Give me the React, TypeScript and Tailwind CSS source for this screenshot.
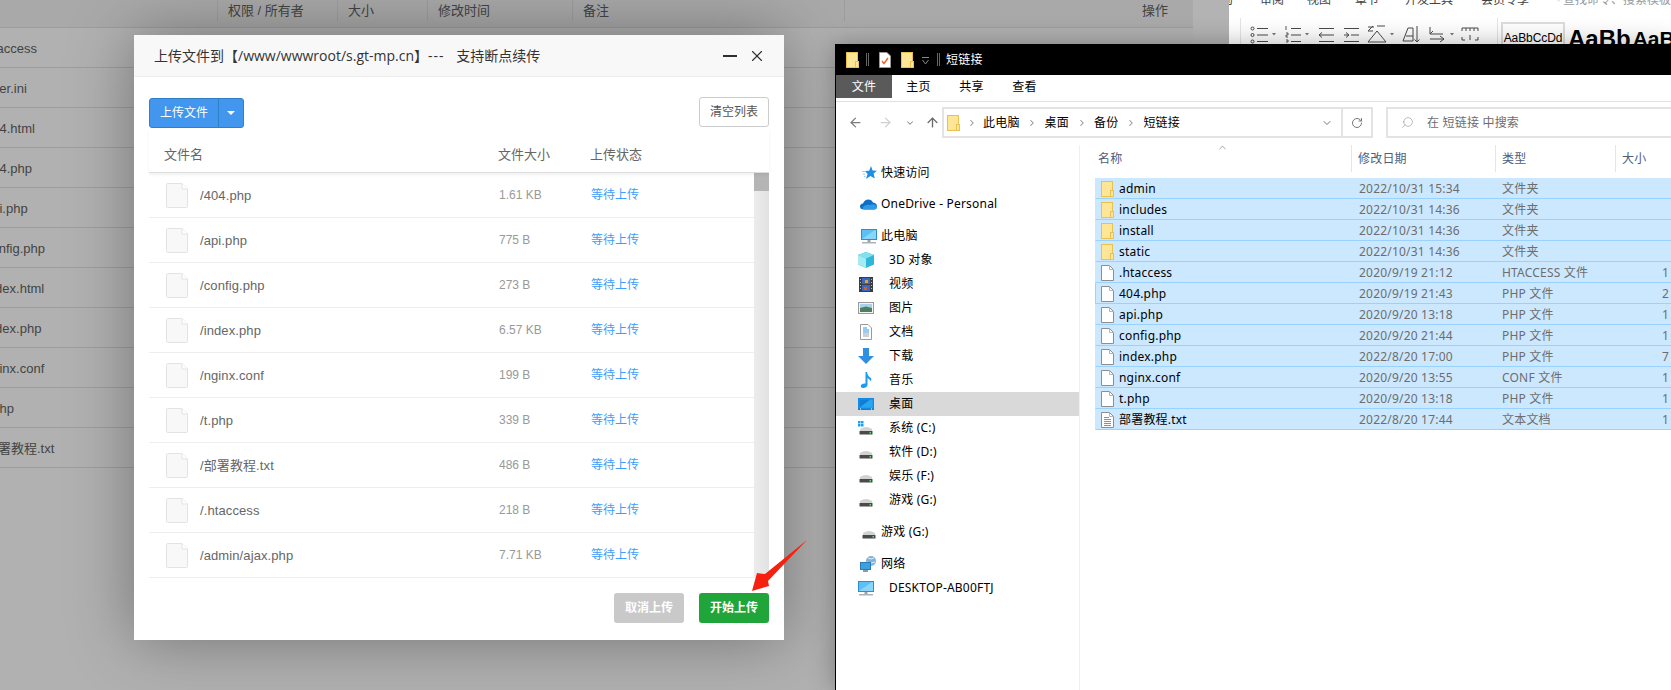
import React from "react";
import { ArrowLeft, ArrowRight, ArrowUp, ChevronDown, ChevronRight, ChevronUp, RotateCw, Search, X } from "lucide-react";

const pageFiles = [".htaccess", ".user.ini", "404.html", "404.php", "api.php", "config.php", "index.html", "index.php", "nginx.conf", "t.php", "部署教程.txt"];

const uploads = [
  ["/404.php", "1.61 KB"],
  ["/api.php", "775 B"],
  ["/config.php", "273 B"],
  ["/index.php", "6.57 KB"],
  ["/nginx.conf", "199 B"],
  ["/t.php", "339 B"],
  ["/部署教程.txt", "486 B"],
  ["/.htaccess", "218 B"],
  ["/admin/ajax.php", "7.71 KB"],
];

const explorerFiles = [
  { name: "admin", date: "2022/10/31 15:34", type: "文件夹", size: "", icon: "folder" },
  { name: "includes", date: "2022/10/31 14:36", type: "文件夹", size: "", icon: "folder" },
  { name: "install", date: "2022/10/31 14:36", type: "文件夹", size: "", icon: "folder" },
  { name: "static", date: "2022/10/31 14:36", type: "文件夹", size: "", icon: "folder" },
  { name: ".htaccess", date: "2020/9/19 21:12", type: "HTACCESS 文件", size: "1 KB", icon: "file" },
  { name: "404.php", date: "2020/9/19 21:43", type: "PHP 文件", size: "2 KB", icon: "file" },
  { name: "api.php", date: "2020/9/20 13:18", type: "PHP 文件", size: "1 KB", icon: "file" },
  { name: "config.php", date: "2020/9/20 21:44", type: "PHP 文件", size: "1 KB", icon: "file" },
  { name: "index.php", date: "2022/8/20 17:00", type: "PHP 文件", size: "7 KB", icon: "file" },
  { name: "nginx.conf", date: "2020/9/20 13:55", type: "CONF 文件", size: "1 KB", icon: "file" },
  { name: "t.php", date: "2020/9/20 13:18", type: "PHP 文件", size: "1 KB", icon: "file" },
  { name: "部署教程.txt", date: "2022/8/20 17:44", type: "文本文档", size: "1 KB", icon: "text" },
];

function FolderIcon() {
  return (
    <svg width="13" height="16" viewBox="0 0 13 16" className="shrink-0">
      <rect x="0.5" y="0.5" width="11" height="15" fill="#ffe696" stroke="#eac04e" />
      <rect x="9.5" y="9.5" width="3" height="6" fill="#ffe696" stroke="#eac04e" />
    </svg>
  );
}

function DocIcon({ lines }: { lines?: boolean }) {
  return (
    <svg width="13" height="16" viewBox="0 0 13 16" className="shrink-0">
      <path d="M0.5 0.5H8.5L12.5 4.5V15.5H0.5Z" fill="#fff" stroke="#8e8e8e" />
      <path d="M8.5 0.5V4.5H12.5" fill="none" stroke="#b5b5b5" />
      {lines && <path d="M3 5.5H8M3 7.5H10M3 9.5H10M3 11.5H10M3 13.5H10" stroke="#8e8e8e" />}
    </svg>
  );
}

function UploadFileIcon() {
  return (
    <svg width="22" height="25" viewBox="0 0 22 25" className="shrink-0">
      <path d="M0.5 1.5Q0.5 0.5 1.5 0.5H16L21.5 6V23.5Q21.5 24.5 20.5 24.5H1.5Q0.5 24.5 0.5 23.5Z" fill="#f8f8f8" stroke="#e3e3e3" />
      <path d="M16 0.5V6H21.5" fill="#fff" stroke="#e3e3e3" />
    </svg>
  );
}

function DriveIcon({ windows }: { windows?: boolean }) {
  return (
    <svg width="16" height="16" viewBox="0 0 16 16" className="shrink-0">
      {windows && <path d="M0 1H2.5V3.5H0ZM3 1H5.5V3.5H3ZM0 4H2.5V6.5H0ZM3 4H5.5V6.5H3Z" fill="#1ba1f2" />}
      <path d="M2 9 Q8 5 14 9V11H2Z" fill="#d2d2d2" />
      <rect x="1.5" y="11" width="13" height="3.5" rx="0.5" fill="#4a4a4a" />
      <rect x="11.5" y="12" width="1.5" height="1.5" fill="#5fe06e" />
    </svg>
  );
}

function StarIcon() {
  return (
    <svg width="15" height="14" viewBox="0 0 15 14" className="shrink-0">
      <path d="M9 0 L10.6 4.4 L15 4.8 L11.6 7.6 L12.8 12.6 L8.4 9.9 L4 13 L5.6 8 L3 5 L7.2 4.8Z" fill="#1a8fe3" />
      <path d="M3 5.5H0M3 8H1M3.4 10.5H2" stroke="#9bcdf0" />
    </svg>
  );
}

function CloudIcon() {
  return (
    <svg width="17" height="11" viewBox="0 0 17 11" className="shrink-0">
      <path d="M4 10.5 Q0 10.5 0 7.5 Q0 5 3 4.6 Q4.5 0.5 8.5 0.5 Q11.5 0.5 13 3.5 Q17 4 17 7.5 Q17 10.5 14 10.5Z" fill="#0f6fc6" />
      <path d="M4.5 10.5 Q2 10.5 3 8 Q6 5 10 6 Q14 4 17 7.5 Q17 10.5 14 10.5Z" fill="#2f9ae8" />
    </svg>
  );
}

function MonitorIcon() {
  return (
    <svg width="16" height="15" viewBox="0 0 16 15" className="shrink-0">
      <rect x="0.5" y="0.5" width="15" height="10" fill="#5cc0f5" stroke="#2f8fc9" />
      <path d="M1 10 L14 1 H15 V10Z" fill="#8ad6fa" />
      <rect x="6.5" y="11" width="3" height="2" fill="#9aa3ab" />
      <rect x="1" y="13" width="14" height="1.5" fill="#aab3ba" />
    </svg>
  );
}

function CubeIcon() {
  return (
    <svg width="16" height="16" viewBox="0 0 16 16" className="shrink-0">
      <path d="M8 0 L16 3 V12.5 L8 16 L0 12.5 V3Z" fill="#2fb6d9" />
      <path d="M8 0 L16 3 L8 6.5 L0 3Z" fill="#7fe2ee" />
      <path d="M0 3 L8 6.5 V16 L0 12.5Z" fill="#a5ebf0" />
    </svg>
  );
}

function FilmIcon() {
  return (
    <svg width="14" height="15" viewBox="0 0 14 15" className="shrink-0">
      <rect width="14" height="15" fill="#3d3d3d" />
      <rect x="3" y="1" width="8" height="6" fill="#3b66c4" />
      <rect x="3" y="8" width="8" height="6" fill="#3b66c4" />
      <rect x="6" y="3" width="3" height="3" fill="#d9a72b" />
      <rect x="5" y="10" width="3" height="3" fill="#c9622b" />
      <path d="M1.5 2V14M12.5 2V14" stroke="#bbb" strokeDasharray="1 2" />
    </svg>
  );
}

function PictureIcon() {
  return (
    <svg width="16" height="12" viewBox="0 0 16 12" className="shrink-0">
      <rect x="0.5" y="0.5" width="15" height="11" fill="#f2f4f5" stroke="#9a9a9a" />
      <rect x="2" y="2" width="12" height="4" fill="#a9d1ea" />
      <path d="M2 6 L8 4.5 L14 6 V10 H2Z" fill="#4f7f63" />
    </svg>
  );
}

function DocsIcon() {
  return (
    <svg width="12" height="16" viewBox="0 0 12 16" className="shrink-0">
      <path d="M0.5 0.5H8L11.5 4V15.5H0.5Z" fill="#fff" stroke="#9a9a9a" />
      <path d="M3 4H7M3 6H9M3 8H9" stroke="#2f9ae8" />
      <path d="M3 10H9M3 12H9" stroke="#a0a0a0" />
    </svg>
  );
}

function DownloadIcon() {
  return (
    <svg width="16" height="16" viewBox="0 0 16 16" className="shrink-0">
      <path d="M5 0H11V8H16L8 16L0 8H5Z" fill="#2f8fe3" />
    </svg>
  );
}

function MusicIcon() {
  return (
    <svg width="12" height="16" viewBox="0 0 12 16" className="shrink-0">
      <path d="M5.5 0H7 Q7.5 4 11 6 Q12 8 10.5 9 Q9 6.5 7.5 6 V13 Q7 16 3 16 Q0 15.5 1 13 Q2.5 11 5.5 11.5Z" fill="#1b9cf0" />
    </svg>
  );
}

function DesktopIcon() {
  return (
    <svg width="16" height="12" viewBox="0 0 16 12" className="shrink-0">
      <rect x="0" y="0" width="16" height="12" fill="#0f7fd6" />
      <path d="M1 10 L13 1 H15 V10Z" fill="#2aa5f0" />
      <rect x="1" y="1" width="14" height="9" fill="none" stroke="#1a95ea" />
      <rect x="2" y="10.5" width="1" height="1" fill="#fff" />
      <rect x="13" y="10.5" width="1" height="1" fill="#fff" />
    </svg>
  );
}

function NetworkIcon() {
  return (
    <svg width="17" height="16" viewBox="0 0 17 16" className="shrink-0">
      <circle cx="11" cy="5" r="5" fill="#7fb3d9" />
      <path d="M8 2 Q11 4 14 2M7 6 Q11 8 15 6" stroke="#e3eff7" fill="none" />
      <rect x="0.5" y="6.5" width="10" height="7" fill="#3ba2e0" stroke="#2a7cb5" />
      <rect x="3" y="14" width="5" height="2" fill="#8f9aa3" />
    </svg>
  );
}

const navItems = [
  { label: "3D 对象", icon: <CubeIcon /> },
  { label: "视频", icon: <FilmIcon /> },
  { label: "图片", icon: <PictureIcon /> },
  { label: "文档", icon: <DocsIcon /> },
  { label: "下载", icon: <DownloadIcon /> },
  { label: "音乐", icon: <MusicIcon /> },
  { label: "桌面", icon: <DesktopIcon />, active: true },
  { label: "系统 (C:)", icon: <DriveIcon windows /> },
  { label: "软件 (D:)", icon: <DriveIcon /> },
  { label: "娱乐 (F:)", icon: <DriveIcon /> },
  { label: "游戏 (G:)", icon: <DriveIcon /> },
];

function NavTop({ icon, label, className }: { icon: React.ReactNode; label: string; className?: string }) {
  return (
    <div className={`flex h-6 items-center ${className ?? ""}`}>
      <div className="flex w-[45px] justify-end pr-[4px]">{icon}</div>
      <span>{label}</span>
    </div>
  );
}

function NavSub({ icon, label, active }: { icon: React.ReactNode; label: string; active?: boolean }) {
  return (
    <div className={`flex h-6 items-center ${active ? "bg-[#d9d9d9]" : ""}`}>
      <div className="flex w-[53px] justify-center pl-[11px] pr-[4px]">{icon}</div>
      <span>{label}</span>
    </div>
  );
}

function BackgroundPage() {
  return (
    <div className="flex h-full w-full font-['Liberation_Sans','Noto_Sans_CJK_SC',sans-serif] text-[13px] text-[#434343]">
      <div className="w-[1193px] shrink-0">
        <div className="flex h-[28px] items-start border-b border-[#9d9d9d] bg-[#a9a9a9]">
          <div className="w-[217px]" />
          <div className="flex h-[21px] w-[120px] items-center border-l border-[#9d9d9d] pl-[10px]">权限 / 所有者</div>
          <div className="flex h-[21px] w-[90px] items-center border-l border-[#9d9d9d] pl-[10px]">大小</div>
          <div className="flex h-[21px] w-[145px] items-center border-l border-[#9d9d9d] pl-[10px]">修改时间</div>
          <div className="flex h-[21px] w-[272px] items-center border-l border-[#9d9d9d] pl-[10px]">备注</div>
          <div className="flex h-[21px] flex-1 items-center border-l border-[#9d9d9d] pl-[297px]">操作</div>
        </div>
        {pageFiles.map((name) => (
          <div key={name} className="flex h-[40px] items-center overflow-hidden border-b border-[#9d9d9d] pt-[2px]">
            <span className={`whitespace-nowrap ${name.startsWith(".") ? "-ml-[18px]" : "-ml-[15px]"}`}>{name}</span>
          </div>
        ))}
      </div>
      <div className="flex-1 bg-gradient-to-r from-[#b3b3b3] from-50% to-[#969696]" />
    </div>
  );
}

function UploadModal() {
  return (
    <div className="absolute left-[134px] top-[35px] flex h-[605px] w-[650px] flex-col bg-white font-['Liberation_Sans','Noto_Sans_CJK_SC',sans-serif] shadow-[0_0_60px_rgba(0,0,0,0.35)]">
      <div className="flex h-[42px] items-center justify-between border-b border-[#eeeeee] bg-[#f8f8f8] pl-[20px] pr-[18px] font-['Open_Sans','Noto_Sans_CJK_SC',sans-serif] text-[14px] text-[#333]">
        <span>
          上传文件到【/www/wwwroot/s.gt-mp.cn】<span className="mr-[8px] tracking-[1px]">---</span> 支持断点续传
        </span>
        <div className="flex items-center gap-[11px]">
          <div className="h-[2px] w-[14px] bg-[#2f2f2f]" />
          <X size={18} strokeWidth={1.5} className="text-[#2f2f2f]" />
        </div>
      </div>

      <div className="flex flex-1 flex-col px-[15px]">
        <div className="mt-[20px] flex items-start justify-between">
          <div className="mt-[1px] flex h-[30px] overflow-hidden rounded-[3px] border border-[#2f80c8] bg-[#4296ee] text-[12px] text-white">
            <div className="flex w-[68px] items-center justify-center">上传文件</div>
            <div className="flex w-[25px] items-center justify-center border-l border-[#2f80c8]">
              <svg width="8" height="4" viewBox="0 0 8 4">
                <path d="M0 0H8L4 4Z" fill="#fff" />
              </svg>
            </div>
          </div>
          <button className="h-[30px] w-[70px] rounded-[3px] border border-[#cccccc] bg-white text-[12px] text-[#555]">清空列表</button>
        </div>

        <div className="relative z-10 flex h-[45px] shrink-0 items-center border-b border-[#dddddd] pt-[10px] text-[13px] text-[#666] shadow-[0_2px_3px_rgba(0,0,0,0.06)]">
          <div className="w-[349px] pl-[15px]">文件名</div>
          <div className="w-[92px]">文件大小</div>
          <div>上传状态</div>
        </div>

        <div className="flex">
          <div className="flex-1">
            {uploads.map(([name, size]) => (
              <div key={name} className="flex h-[45px] items-center border-b border-[#eeeeee]">
                <div className="ml-[17px] mr-[12px] flex">
                  <UploadFileIcon />
                </div>
                <div className="w-[299px] pt-[1px] text-[13px] tracking-[0.1px] text-[#666]">{name}</div>
                <div className="w-[92px] text-[12px] text-[#999]">{size}</div>
                <div className="text-[12px] text-[#3d9dfc]">等待上传</div>
              </div>
            ))}
          </div>
          <div className="w-[15px] bg-gradient-to-r from-[#ececec] to-[#e2e2e2]">
            <div className="h-[18px] bg-[#b5b5b5]" />
          </div>
        </div>

        <div className="mt-[15px] flex justify-end gap-[15px] text-[12px] font-bold text-white">
          <button className="h-[30px] w-[70px] rounded-[3px] bg-[#c9c9c9]">取消上传</button>
          <button className="h-[30px] w-[70px] rounded-[3px] bg-[#20a53a]">开始上传</button>
        </div>
      </div>
    </div>
  );
}

function WordRibbon() {
  return (
    <div className="absolute bottom-[646px] left-[1229px] right-0 top-0 overflow-hidden bg-white font-['Liberation_Sans','Noto_Sans_CJK_SC',sans-serif] text-[12px] text-[#444]">
      <div className="-mt-[7px] flex h-[14px] items-center whitespace-nowrap">
        <span className="-ml-[8px]">局</span>
        <span className="ml-[27px]">审阅</span>
        <span className="ml-[23px]">视图</span>
        <span className="ml-[24px]">章节</span>
        <span className="ml-[26px]">开发工具</span>
        <span className="ml-[28px]">会员专享</span>
        <Search size={13} strokeWidth={1.2} className="ml-[28px] text-[#999]" />
        <span className="ml-[3px] text-[#999]">查找命令、搜索模板</span>
      </div>
      <div className="flex h-[38px] items-start">
        <div className="ml-[11px] mt-[11px] h-[28px] border-l border-[#e5e5e5]" />
        <svg width="245" height="24" viewBox="0 0 245 24" className="mt-[15px] shrink-0" fill="none" stroke="#4a4a4a">
          {/* bullets */}
          <circle cx="11.5" cy="6.5" r="1.5" />
          <circle cx="11.5" cy="13" r="1.5" />
          <circle cx="11.5" cy="19.5" r="1.5" />
          <path d="M16 6.5H27M16 13H27M16 19.5H27" />
          <path d="M31 11H35L33 13.5Z" fill="#777" stroke="none" />
          {/* numbering */}
          <path d="M45 4V8M45 11H47V13H45V15H47M45 18H47V20H45" strokeWidth="0.9" />
          <path d="M50 6.5H60M50 13H60M50 19.5H60" />
          <path d="M64 11H68L66 13.5Z" fill="#777" stroke="none" />
          {/* indent */}
          <path d="M78 6.5H93M84 13H93M78 19.5H93M84 13H78M81 10.5L78 13L81 15.5" />
          <path d="M103 6.5H118M110 13H118M103 19.5H118M103 13H108M105 10.5L108 13L105 15.5" />
          {/* line spacing */}
          <path d="M127 9L132 4M127 9L132 9M136 4H144M127 20L136 9L145 20ZM127 5H133" />
          <path d="M149 11H153L151 13.5Z" fill="#777" stroke="none" />
          {/* sort */}
          <path d="M162 19L167 6H172V19ZM165 14H172" />
          <path d="M176 4V20M173.5 17.5L176 20L178.5 17.5" />
          {/* enter */}
          <path d="M187 5V12H200M187 12L190 9M201 17H187M197 14L201 17L197 20" transform="translate(2 0)" />
          <path d="M209 11H213L211 13.5Z" fill="#777" stroke="none" />
          {/* ruler */}
          <path d="M221 9V6H237V9M221 15V18H224M234 18H237V15M225 6V9M229 6V9M233 6V9M229 13V18" />
        </svg>
        <div className="ml-[11px] mt-[11px] h-[28px] border-l border-[#e5e5e5]" />
        <div className="ml-[3px] mt-[15px] flex h-[24px] w-[64px] shrink-0 items-center justify-center border-2 border-b-0 border-[#dddddd] pt-[6px] text-[12px] tracking-[-0.1px] text-black">
          AaBbCcDd
        </div>
        <span className="ml-[3px] mt-[17px] whitespace-nowrap text-[24px] font-bold leading-[30px] text-black">AaBb</span>
        <span className="ml-[2px] mt-[18px] whitespace-nowrap text-[21px] font-bold leading-[28px] text-black">AaB</span>
      </div>
    </div>
  );
}

function ExplorerWindow() {
  return (
    <div className="absolute bottom-0 left-[835px] right-0 top-[44px] flex flex-col overflow-hidden border-l border-black bg-white font-['Noto_Sans','Noto_Sans_CJK_SC',sans-serif] text-[12px] tracking-[0.2px] text-black shadow-[0_0_24px_rgba(0,0,0,0.3)]">
      {/* title bar */}
      <div className="flex h-[31px] shrink-0 items-center bg-black pl-[10px] text-white">
        <FolderIcon />
        <div className="ml-[7px] h-[13px] w-[3px] border-x border-[#666]" />
        <div className="ml-[10px] flex">
          <svg width="12" height="16" viewBox="0 0 12 16">
            <path d="M0.5 0.5H8L11.5 4V15.5H0.5Z" fill="#fff" stroke="#999" />
            <path d="M3 9L5 11.5L9 6" stroke="#f0622b" strokeWidth="1.4" fill="none" />
          </svg>
        </div>
        <div className="ml-[10px] flex">
          <FolderIcon />
        </div>
        <svg width="7" height="8" viewBox="0 0 7 8" className="ml-[8px] mt-[3px]">
          <path d="M0 0.5H7M0.5 3L3.5 7L6.5 3" stroke="#888" fill="none" />
        </svg>
        <div className="ml-[8px] h-[13px] w-[3px] border-x border-[#666]" />
        <span className="ml-[6px]">短链接</span>
      </div>

      {/* menu */}
      <div className="flex h-[23px] shrink-0">
        <div className="flex w-[56px] items-center justify-center bg-[#5a5a5a] text-white">文件</div>
        {["主页", "共享", "查看"].map((m) => (
          <div key={m} className="flex w-[53px] items-center justify-center">
            {m}
          </div>
        ))}
      </div>

      {/* address row */}
      <div className="mt-[3px] flex h-[37px] shrink-0 items-end border-t border-[#e1e1e1]">
        <div className="flex h-[31px] w-[106px] shrink-0 items-center">
          <ArrowLeft size={15} strokeWidth={2} className="ml-[12px] text-[#7d7d7d]" />
          <ArrowRight size={15} strokeWidth={2} className="ml-[15px] text-[#d0d0d0]" />
          <ChevronDown size={10} strokeWidth={2.5} className="ml-[12px] text-[#8d8d8d]" />
          <ArrowUp size={15} strokeWidth={2.2} className="ml-[10px] text-[#6d6d6d]" />
        </div>
        <div className="flex h-[31px] w-[431px] shrink-0 items-center border-2 border-[#e3e3e3] pl-[3px]">
          <FolderIcon />
          <ChevronRight size={10} strokeWidth={2.5} className="ml-[7px] mr-[6px] text-[#8d8d8d]" />
          <span>此电脑</span>
          <ChevronRight size={10} strokeWidth={2.5} className="mx-[7.5px] text-[#8d8d8d]" />
          <span>桌面</span>
          <ChevronRight size={10} strokeWidth={2.5} className="mx-[7.5px] text-[#8d8d8d]" />
          <span>备份</span>
          <ChevronRight size={10} strokeWidth={2.5} className="mx-[7.5px] text-[#8d8d8d]" />
          <span>短链接</span>
          <ChevronDown size={12} strokeWidth={2} className="ml-auto mr-[8px] text-[#777]" />
          <div className="flex h-full w-[30px] items-center justify-center border-l-2 border-[#e3e3e3]">
            <RotateCw size={12} strokeWidth={2} className="text-[#777]" />
          </div>
        </div>
        <div className="ml-[13px] flex h-[31px] flex-1 items-center border-2 border-r-0 border-[#e3e3e3] pl-[13px] text-[#6d6d6d]">
          <Search size={13} strokeWidth={1.2} className="-scale-x-100 text-[#999]" />
          <span className="ml-[13px]">在 短链接 中搜索</span>
        </div>
      </div>

      {/* body */}
      <div className="mt-[7px] flex flex-1">
        <div className="w-[243px] shrink-0 pt-[16px]">
          <NavTop icon={<StarIcon />} label="快速访问" />
          <NavTop icon={<CloudIcon />} label="OneDrive - Personal" className="mt-[7px]" />
          <NavTop icon={<MonitorIcon />} label="此电脑" className="mt-[8px]" />
          {navItems.map((n) => (
            <NavSub key={n.label} icon={n.icon} label={n.label} active={n.active} />
          ))}
          <NavTop icon={<DriveIcon />} label="游戏 (G:)" className="mt-[8px]" />
          <NavTop icon={<NetworkIcon />} label="网络" className="mt-[8px]" />
          <NavSub icon={<MonitorIcon />} label="DESKTOP-AB00FTJ" />
        </div>

        <div className="flex-1 border-l border-[#f0f0f0] pl-[15px]">
          <div className="relative flex h-[27px] text-[#4c607a]">
            <div className="flex w-[257px] items-center border-r border-[#e5e5e5] pl-[3px]">名称</div>
            <ChevronUp size={11} strokeWidth={1.5} className="absolute left-[122px] top-[-3px] text-[#777]" />
            <div className="flex w-[144px] items-center border-r border-[#e5e5e5] pl-[6px]">修改日期</div>
            <div className="flex w-[120px] items-center border-r border-[#e5e5e5] pl-[6px]">类型</div>
            <div className="flex flex-1 items-center pl-[6px]">大小</div>
          </div>
          <div className="mt-[6px]">
            {explorerFiles.map((f) => (
              <div
                key={f.name}
                className={`grid h-[21px] grid-cols-[263px_143px_160px_1fr] items-center overflow-hidden whitespace-nowrap border-b border-l border-b-[#99d1ff] bg-[#cce8ff] pt-[1px] ${
                  f.name === "404.php" ? "border-l-[#99d1ff]" : "border-l-[#cce8ff]"
                }`}
              >
                <div className="flex items-center pl-[5px]">
                  {f.icon === "folder" ? <FolderIcon /> : <DocIcon lines={f.icon === "text"} />}
                  <span className="ml-[5px]">{f.name}</span>
                </div>
                <div className="text-[#6d6d6d]">{f.date}</div>
                <div className="text-[#6d6d6d]">{f.type}</div>
                <div className="text-[#6d6d6d]">{f.size}</div>
              </div>
            ))}
          </div>
        </div>
      </div>
    </div>
  );
}

export default function App() {
  return (
    <div className="relative h-[690px] w-[1671px] overflow-hidden bg-[#b1b1b1]">
      <BackgroundPage />
      <UploadModal />
      <WordRibbon />
      <ExplorerWindow />
      {/* red annotation arrow */}
      <svg width="80" height="70" viewBox="0 0 80 70" className="absolute left-[740px] top-[530px]">
        <path d="M67 10 L25 44 L17 43 L12 61 L29 56 L28 51Z" fill="#f5200f" />
      </svg>
    </div>
  );
}
